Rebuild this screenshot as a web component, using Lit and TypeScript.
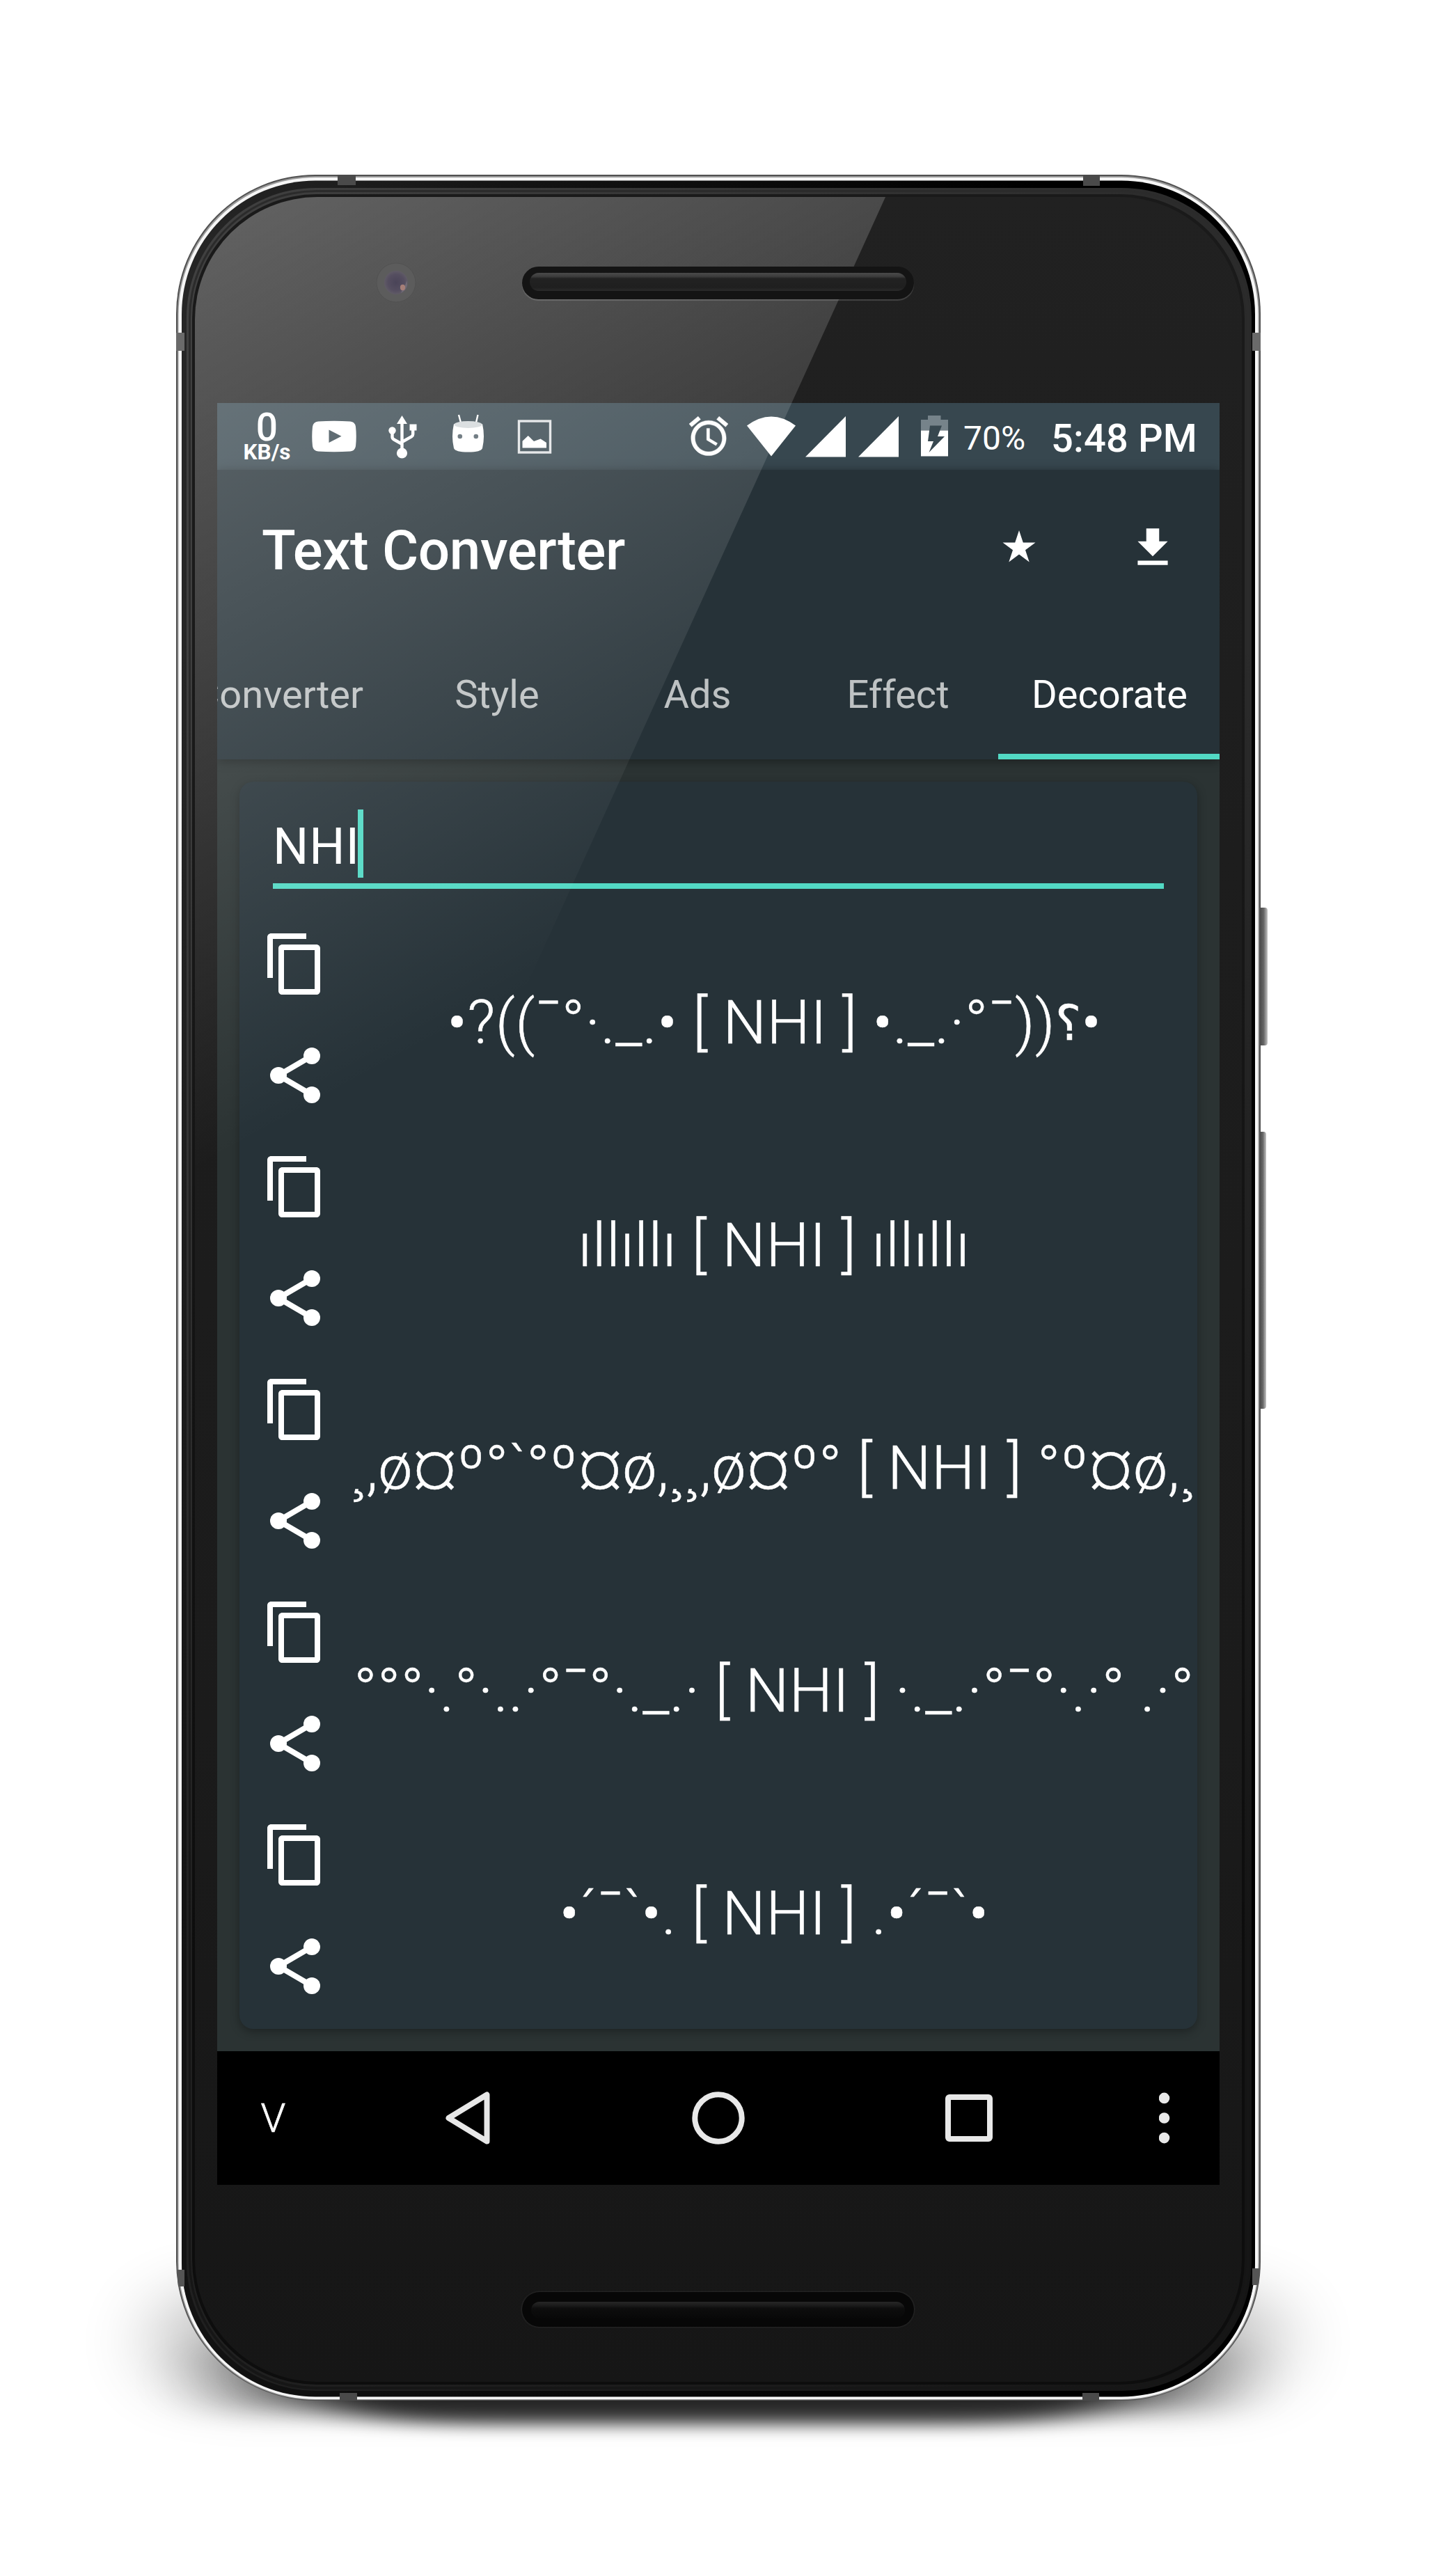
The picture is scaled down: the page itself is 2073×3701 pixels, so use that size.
import { LitElement, html, css, svg } from "lit";
import { customElement, property } from "lit/decorators.js";

const COPY = "M16 1H3.4C2.6 1 2 1.6 2 2.4V17h2V3h12V1zm3.6 4H7.4C6.6 5 6 5.6 6 6.4v15.2c0 .8.6 1.4 1.4 1.4h12.2c.8 0 1.4-.6 1.4-1.4V6.4c0-.8-.6-1.4-1.4-1.4zM19 21H8V7h11v14z";
const ALARM =
  "M22 5.72l-4.6-3.86-1.29 1.53 4.6 3.86L22 5.72zM7.88 3.39L6.6 1.86 2 5.71l1.29 1.53 4.59-3.85zM12.5 8H11v6l4.75 2.85.75-1.23-4-2.37V8zM12 4c-4.97 0-9 4.03-9 9s4.02 9 9 9c4.97 0 9-4.03 9-9s-4.03-9-9-9zm0 16c-3.87 0-7-3.13-7-7s3.13-7 7-7 7 3.13 7 7-3.13 7-7 7z";

@customElement("status-bar")
export class StatusBar extends LitElement {
  static styles = css`
    :host { display: block; }
    .bar { display: flex; height: 96px; background: #37474f; color: #fff; padding-left: 38px; box-sizing: border-box; }
    svg { display: block; flex: none; height: 96px; fill: #fff; overflow: visible; }
    .speed { width: 67px; display: flex; flex-direction: column; align-items: center; padding-top: 8px; flex: none; }
    .rate { font-size: 55px; line-height: 54px; font-weight: 500; }
    .unit { font-size: 31.5px; line-height: 17px; font-weight: 700; white-space: nowrap; }
    .youtube { width: 64px; margin-left: 31px; }
    .usb { width: 40px; margin-left: 46px; }
    .robot { width: 47px; margin-left: 51px; }
    .image { width: 48px; margin-left: 48px; }
    .alarm { width: 56px; margin-left: 198px; }
    .wifi { width: 70px; margin-left: 27px; }
    .signal { width: 58px; margin-left: 14px; }
    .signal2 { width: 58px; margin-left: 18px; }
    .battery { width: 39px; margin-left: 32px; }
    .percent { margin-left: 22px; font-size: 48px; line-height: 96px; padding-top: 3px; }
    .time { margin-left: auto; margin-right: 32px; font-size: 56px; line-height: 96px; font-weight: 500; letter-spacing: 0.15px; padding-top: 3px; white-space: nowrap; }
  `;
  render() {
    return html`<div class="bar">
      <div class="speed"><div class="rate">0</div><div class="unit">KB/s</div></div>
      <svg class="youtube" viewBox="0 0 64 96"><path fill-rule="evenodd" d="M9 26.4Q32 25 55 26.4Q62 27 63 34Q64.5 48 63 62Q62 69 55 69.4Q32 71 9 69.4Q2 69 1 62Q-.5 48 1 34Q2 27 9 26.4ZM24.5 38.5V57L42.5 47.7Z"/></svg>
      <svg class="usb" viewBox="0 0 40 96"><path fill="none" stroke="#fff" stroke-width="4.400" d="M19.5 26V70M5.5 40V49Q5.5 51 8 52.5L19.5 59M35.2 36V45Q35.2 47 33 48.5L19.5 56"/><path d="M19.5 18L27 30H12ZM30.5 30.5h10v9h-10z"/><circle cx="5.5" cy="39.5" r="5.200"/><circle cx="19.5" cy="72" r="7.600"/></svg>
      <svg class="robot" viewBox="0 0 47 96"><path d="M10 17L13.5 30M37.5 17L34.5 30" stroke="#fff" stroke-width="2.4"/><path d="M3 30Q23 38 44 30Q48 48 44 65Q42 70.500 23.500 70.500Q5 70.500 3 65Q-1 48 3 30Z"/><ellipse cx="23.500" cy="31" rx="20" ry="5" fill="#d3d8da"/><circle cx="11.800" cy="48" r="3.300" fill="#54626a"/><circle cx="34.800" cy="48" r="3.300" fill="#54626a"/></svg>
      <svg class="image" viewBox="0 0 48 96"><rect x="1.500" y="26" width="45" height="45" fill="none" stroke="#fff" stroke-opacity=".85" stroke-width="3.400"/><path d="M6.500 64.500V54.700L14.700 47L23 55L32.600 51.500L41 57V64.500Z"/></svg>
      <svg class="alarm" viewBox="0 0 56 96"><path transform="translate(-5.600 14) scale(2.800)" d=${ALARM} stroke="#fff" stroke-width=".15"/></svg>
      <svg class="wifi" viewBox="0 0 70 96"><path d="M0 32.500Q35 6.500 70 32.500L35 76.500Z"/></svg>
      <svg class="signal" viewBox="0 0 58 96"><path d="M0 77.500H58V19Z"/></svg>
      <svg class="signal2" viewBox="0 0 58 96"><path d="M0 77.500H58V19Z"/></svg>
      <svg class="battery" viewBox="0 0 39 96"><path fill="#76838a" d="M0 24H10V18H28.500V24H39V39.500H0Z"/><path d="M0 39.500H39V76.500H0Z"/><path fill="#37474f" d="M13 32.500H30L24 48H34L11.500 71L18 55H10Z"/></svg>
      <div class="percent">70%</div>
      <div class="time">5:48 PM</div>
    </div>`;
  }
}

@customElement("decor-row")
export class DecorRow extends LitElement {
  @property() text = "";
  static styles = css`
    :host { display: block; }
    .row { display: flex; height: 320px; }
    .actions { display: flex; flex-direction: column; width: 160px; flex: none; }
    .icon { display: block; width: 96px; height: 96px; padding: 32px; fill: #fff; }
    .label { flex: 1; min-width: 0; display: flex; overflow: hidden; font-size: 88px; font-weight: 300; letter-spacing: 0.46px; line-height: 312px; color: #fff; white-space: pre; padding-top: 8px; height: 312px; }
    .value { margin: 0 auto; -webkit-text-stroke: 0.5px #fff; }
    .mirrored { font-size: 70px; line-height: 0; position: relative; top: -5px; }
  `;
  render() {
    const [head, tail] = this.text.split("؟");
    return html`<div class="row">
      <div class="actions">
        <svg class="icon" viewBox="0 0 24 24"><path d=${COPY}/></svg>
        <svg class="icon" viewBox="0 0 24 24"><circle cx="18" cy="5" r="3"/><circle cx="6" cy="12" r="3"/><circle cx="18" cy="19" r="3"/><path d="M18 5L6 12L18 19" fill="none" stroke="#fff" stroke-width="2"/></svg>
      </div>
      <div class="label"><span class="value">${head}${tail === undefined ? "" : html`<span class="mirrored">؟</span>${tail}`}</span></div>
    </div>`;
  }
}

@customElement("app-root")
export class AppRoot extends LitElement {
  private tabs = ["Converter", "Style", "Ads", "Effect", "Decorate"];
  private rows = [
    "•?((¯°·._.• [ NHI ] •._.·°¯))؟•",
    "ıllıllı [ NHI ] ıllıllı",
    "¸,ø¤º°`°º¤ø,¸¸,ø¤º° [ NHI ] °º¤ø,¸¸",
    "°°°·.°·..·°¯°·._.· [ NHI ] ·._.·°¯°·.·° .·°",
    "•´¯`•. [ NHI ] .•´¯`•",
  ];

  static styles = css`
    :host { display: block; font-family: Roboto, "Noto Sans", "DejaVu Sans", sans-serif; }
    .page { position: relative; width: 2073px; height: 3701px; box-sizing: border-box; padding: 251px 262px 0 253px; background: #fff; overflow: hidden; }
    .shadow, .frame, .glare { position: absolute; left: 0; top: 0; display: block; }
    .glare { z-index: 1; }
    .phone { position: relative; width: 1558px; height: 3198px; box-sizing: border-box; padding: 32px 27px 27px 27px; }
    .frame { overflow: visible; }
    .glass { position: relative; height: 3139px; border-radius: 176px; overflow: hidden; background: linear-gradient(180deg, #212121, #1d1d1d 30%, #1b1b1b 70%, #161616); }
    .top { display: flex; height: 296px; padding-left: 261px; box-sizing: border-box; }
    .camera { position: relative; z-index: 2; width: 58px; height: 60px; margin-top: 93px; flex: none; }
    .speaker { position: relative; z-index: 2; box-sizing: border-box; width: 563px; height: 47px; border-radius: 25px; background: #141414; padding: 9px 11px 12px; margin: 100px 0 0 151px; box-shadow: 0 2px 1px rgba(255, 255, 255, 0.16); }
    .grille { height: 26px; border-radius: 13px; background: linear-gradient(#4a4a4a, #3c3c3c 20%, #222 32%, #1f1f1f 80%, #2a2a2a); }
    .bottom { display: flex; }
    .bottom .speaker { margin: 154px 0 0 470px; height: 50px; padding: 14px 13px 12px; background: #070707; box-shadow: 0 0 2px 1px rgba(60, 60, 60, 0.5); }
    .bottom .grille { height: 24px; background: linear-gradient(#262626, #1c1c1c 20%, #0d0d0d 40%, #080808); }
    .screen { width: 1440px; height: 2560px; margin-left: 32px; background: #2b3333; display: flex; flex-direction: column; overflow: hidden; }
    .header { position: relative; background: #263238; box-shadow: 0 2px 14px rgba(0, 0, 0, 0.4); flex: none; }
    .appbar { display: flex; align-items: center; height: 224px; padding: 0 59px 0 64px; box-sizing: border-box; }
    .title { flex: 1; color: #fff; font-size: 80px; font-weight: 500; letter-spacing: -0.35px; line-height: 94px; padding-top: 8px; white-space: nowrap; }
    .action { display: block; width: 74px; height: 74px; fill: #fff; margin-left: 118px; }
    .tabs { display: flex; justify-content: flex-end; height: 192px; overflow: hidden; }
    .tab { box-sizing: border-box; flex: none; min-width: 288px; padding: 4px 48px 0; font-size: 56px; line-height: 190px; height: 192px; text-align: center; color: rgba(255, 255, 255, 0.7); }
    .tab.active { width: 318px; color: #fff; box-shadow: inset 0 -8px #52d9c4; }
    .content { flex: 1; padding: 32px; min-height: 0; display: flex; }
    .card { flex: 1; background: #263238; border-radius: 20px; box-shadow: 0 4px 14px rgba(0, 0, 0, 0.32); overflow: hidden; padding-top: 40px; }
    .field { margin: 0 48px 28px; height: 106px; border-bottom: 8px solid #52d9c4; display: flex; }
    .entry { font-size: 72px; letter-spacing: 0.9px; line-height: 98px; height: 98px; color: #fff; padding-top: 5px; box-sizing: border-box; }
    .caret { width: 8px; height: 98px; background: #52d9c4; margin-left: -3px; }
    .nav { display: flex; height: 192px; background: #000; padding-left: 60px; box-sizing: border-box; flex: none; }
    .nav svg { display: block; height: 192px; fill: #e8e8e8; flex: none; }
    .hide { width: 41px; text-align: center; font-size: 58px; font-weight: 300; -webkit-text-stroke: 0.6px #fff; line-height: 192px; color: #fff; }
    .back { width: 64px; margin-left: 227px; }
    .home { width: 76px; margin-left: 290px; }
    .recent { width: 68px; margin-left: 288px; }
    .more { width: 16px; margin-left: 239px; }
  `;

  private ring(x: number, y: number, x2: number, y2: number, r: number, fill: string) {
    return svg`<rect x=${x} y=${y} width=${x2 - x} height=${y2 - y} rx=${r} fill=${fill}/>`;
  }

  render() {
    return html`<div class="page">
      <svg class="shadow" width="2073" height="3701" viewBox="0 0 2073 3701">
        <defs>
          <filter id="soft" x="-30%" y="-100%" width="160%" height="300%"><feGaussianBlur stdDeviation="60 44"/></filter>
          <filter id="under" x="-30%" y="-100%" width="160%" height="300%"><feGaussianBlur stdDeviation="60 16"/></filter>
          <filter id="tight" x="-20%" y="-80%" width="140%" height="260%"><feGaussianBlur stdDeviation="52 12"/></filter>
        </defs>
        <rect x="236" y="3300" width="1591" height="128" rx="56" fill="#000" opacity=".3" filter="url(#soft)"/>
        <rect x="320" y="3370" width="1424" height="96" rx="40" fill="#000" opacity=".42" filter="url(#under)"/>
        <path d="M420 3400H1644Q1640 3478 1400 3482H664Q420 3478 420 3400Z" fill="#000" opacity=".74" filter="url(#tight)"/>
      </svg>
      <div class="phone">
        <svg class="frame" width="1558" height="3198" viewBox="0 0 1558 3198">
          <defs>
            <linearGradient id="dark" x1="0" x2="1"><stop offset="0" stop-color="#262626"/><stop offset=".3" stop-color="#141414"/><stop offset=".8" stop-color="#000"/></linearGradient>
            <linearGradient id="mid" x1="0" x2="1"><stop offset="0" stop-color="#404040"/><stop offset="1" stop-color="#2a2a2a"/></linearGradient>
            <linearGradient id="fade" x1="0" y1="0" x2="0" y2="1"><stop offset=".2" stop-color="#000" stop-opacity="0"/><stop offset=".8" stop-color="#000" stop-opacity=".5"/></linearGradient>
            <linearGradient id="key" x1="0" x2="1"><stop offset="0" stop-color="#3c3c3c"/><stop offset=".6" stop-color="#666"/><stop offset="1" stop-color="#c4c4c4"/></linearGradient>
          </defs>
          <rect x="1554" y="1053" width="14" height="198" rx="4" fill="url(#key)"/>
          <rect x="1554" y="1375" width="12" height="398" rx="4" fill="url(#key)"/>
          ${this.ring(0, 0, 1558, 3198, 200, "#505050")}
          ${this.ring(2, 2, 1556, 3197, 198, "#9a9a9a")}
          ${this.ring(3.5, 4, 1554.5, 3196, 197, "#f6f6f6")}
          ${this.ring(8, 8.5, 1550, 3192.5, 192, "url(#dark)")}
          ${this.ring(15, 19, 1545, 3184, 186, "url(#mid)")}
          ${this.ring(18, 22, 1542, 3182, 184, "#2b2b2b")}
          ${this.ring(21, 25, 1538, 3178, 181, "url(#mid)")}
          ${this.ring(23, 28, 1535, 3175, 179, "#1a1a1a")}
          <rect x="8" y="8" width="1542" height="3184" rx="192" fill="url(#fade)"/>
          <path fill="#4a4a4a" d="M232 0h26v15h-26zM1303 0h24v16h-24zM235 3187h25v11h-25zM1302 3187h24v11h-24z"/>
          <path fill="#6a6a6a" d="M0 227h12v26h-12zM1546 227h12v26h-12z"/>
          <path fill="#555" d="M1 3010h11v24h-9zM1546 3008h11l-2 24h-9z"/>
        </svg>
        <div class="glass">
          <svg class="glare" width="1504" height="3139" viewBox="0 0 1504 3139">
            <defs>
              <linearGradient id="shine" gradientUnits="userSpaceOnUse" x1="0" y1="0" x2="590" y2="1080">
                <stop offset="0" stop-color="#fff" stop-opacity=".3"/><stop offset="1" stop-color="#fff" stop-opacity="0"/>
              </linearGradient>
            </defs>
            <path d="M0 0H992L0 2180Z" fill="url(#shine)"/>
          </svg>
          <div class="top">
            <svg class="camera" viewBox="0 0 58 60">
              <defs><radialGradient id="lens"><stop offset="0" stop-color="#4a4458"/><stop offset=".7" stop-color="#554e60"/><stop offset="1" stop-color="#605b66"/></radialGradient></defs>
              <circle cx="28" cy="30" r="28" fill="#5c5c5c" stroke="#525252" stroke-width="1"/>
              <circle cx="28" cy="30" r="17" fill="url(#lens)"/>
              <path d="M37 40Q42 34 43 27Q47 38 35 45Z" fill="#706b76"/>
              <ellipse cx="37.500" cy="37" rx="3.600" ry="4.200" fill="#a67f78"/>
            </svg>
            <div class="speaker"><div class="grille"></div></div>
          </div>
          <div class="screen">
            <status-bar></status-bar>
            <div class="header">
              <div class="appbar">
                <div class="title">Text Converter</div>
                <svg class="action" viewBox="0 0 74 74"><path d="M37 12L42.800 29.500H60.500L46 40.200L51.700 57.500L37 46.500L22.300 57.500L28 40.200L13.500 29.500H31.200Z"/></svg>
                <svg class="action" viewBox="0 0 24 24"><path d="M19 9h-4V3H9v6H5l7 7 7-7zM5 18v2h14v-2H5z"/></svg>
              </div>
              <div class="tabs">
                ${this.tabs.map((t) => html`<div class="tab ${t === "Decorate" ? "active" : ""}">${t}</div>`)}
              </div>
            </div>
            <div class="content">
              <div class="card">
                <div class="field"><div class="entry">NHI</div><div class="caret"></div></div>
                ${this.rows.map((r) => html`<decor-row .text=${r}></decor-row>`)}
              </div>
            </div>
            <div class="nav">
              <div class="hide">V</div>
              <svg class="back" viewBox="0 0 64 192"><path d="M59.500 62.500V129.500L4.500 96Z" fill="none" stroke="#e8e8e8" stroke-width="8" stroke-linejoin="round"/></svg>
              <svg class="home" viewBox="0 0 76 192"><circle cx="38" cy="96" r="33.700" fill="none" stroke="#e8e8e8" stroke-width="8"/></svg>
              <svg class="recent" viewBox="0 0 68 192"><rect x="4" y="66" width="60" height="60" rx="2" fill="none" stroke="#e8e8e8" stroke-width="8"/></svg>
              <svg class="more" viewBox="0 0 16 192"><circle cx="7.500" cy="67.400" r="7.800"/><circle cx="7.500" cy="96" r="7.800"/><circle cx="7.500" cy="124.600" r="7.800"/></svg>
            </div>
          </div>
          <div class="bottom"><div class="speaker"><div class="grille"></div></div></div>
        </div>
      </div>
    </div>`;
  }
}
